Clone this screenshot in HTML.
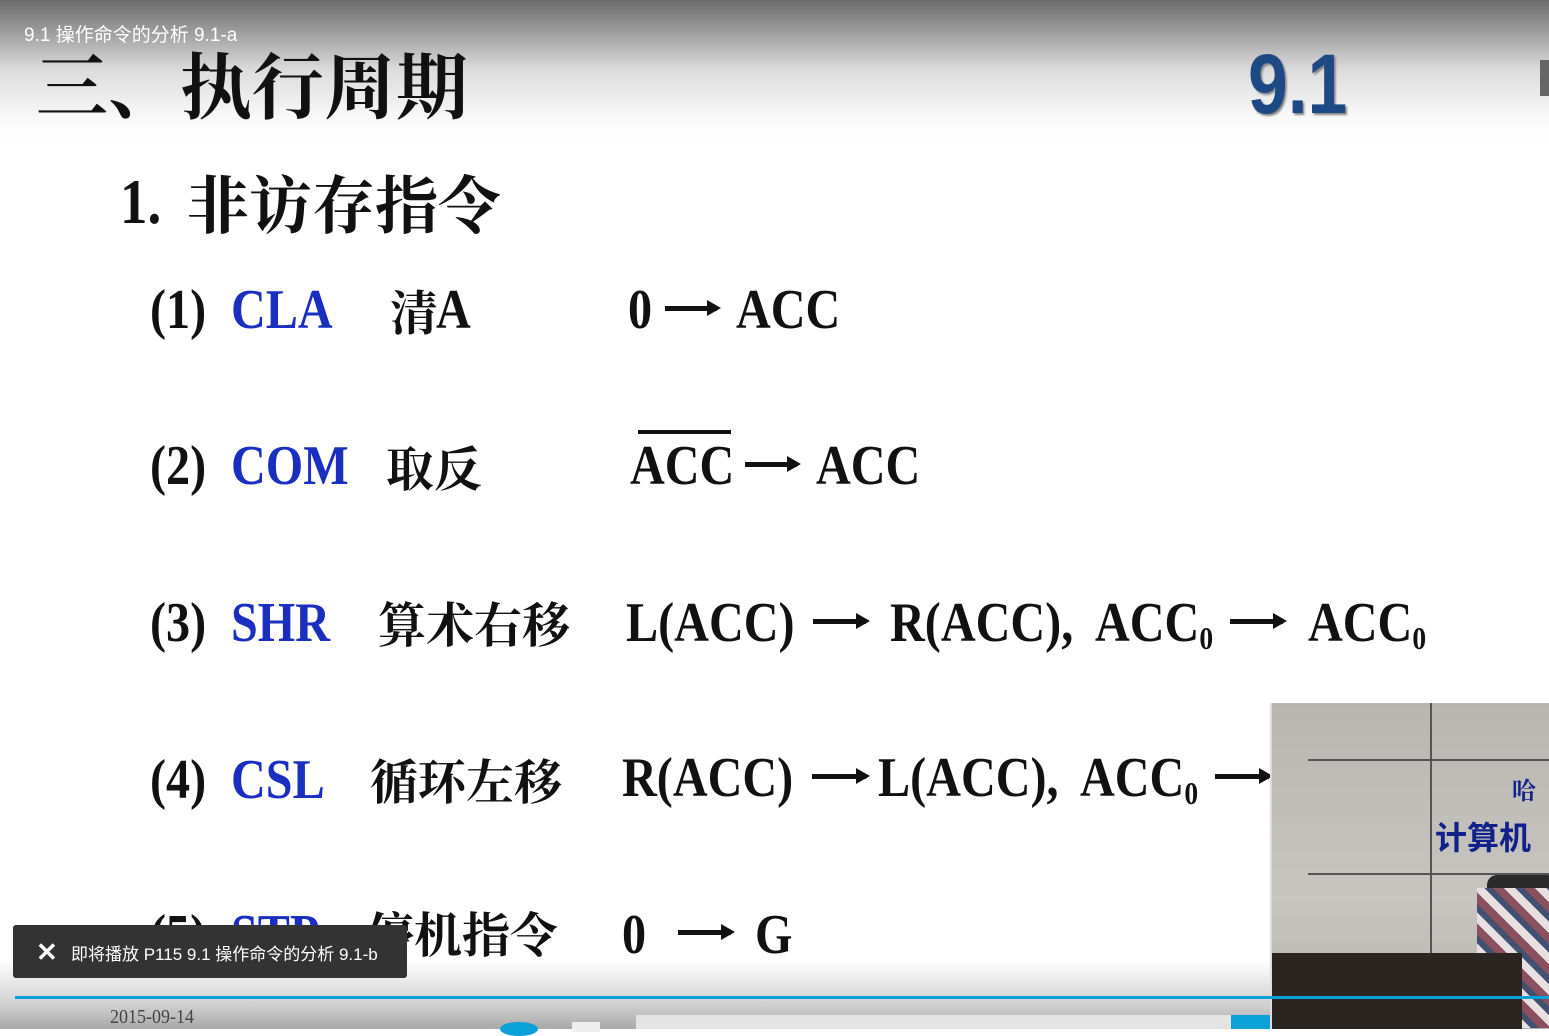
<!DOCTYPE html>
<html><head><meta charset="utf-8"><style>
*{margin:0;padding:0;box-sizing:border-box}
body{width:1549px;height:1029px;overflow:hidden;position:relative;background:#fff;font-family:"Liberation Serif","Noto Serif CJK SC",serif}
.top{position:absolute;left:0;top:0;width:1549px;height:140px;background:linear-gradient(#6c6c6c 0px,#9a9a9a 30px,#dcdcdc 70px,#fafafa 120px,#fff 140px)}
.a{position:absolute;white-space:nowrap}
.s{font-weight:bold;font-size:56px;line-height:56px;color:#111;transform:scaleX(.86);transform-origin:left top}
.b{color:#1a2fc0}
.s sub{font-size:32px;vertical-align:-8px}
.c{font-family:"Noto Serif CJK SC",serif;font-weight:700;font-size:48px;line-height:48px;color:#111}
.ar{position:absolute;height:5px;background:#111}
.ar::after{content:"";position:absolute;right:-4px;top:-6px;border-left:14px solid #111;border-top:8.5px solid transparent;border-bottom:8.5px solid transparent}
.bot{position:absolute;left:0;top:960px;width:1549px;height:69px;background:linear-gradient(rgba(255,255,255,0),#d0d0d0 45px,#a8a8a8)}
</style></head><body>
<div class="top"></div>
<div class="a" style="left:24px;top:20px;font:19px 'Liberation Sans','Noto Sans CJK SC',sans-serif;color:#fff">9.1 操作命令的分析 9.1-a</div>
<div class="a c" style="left:36px;top:46px;font-size:72px;line-height:72px">三、执行周期</div>
<div class="a" style="left:1248px;top:38px;font:bold 84px 'Liberation Sans',sans-serif;line-height:92px;color:#1d4a85;text-shadow:2px 2px 2px #888;transform:scaleX(.85);transform-origin:left top">9.1</div>
<div class="a" style="left:1540px;top:60px;width:9px;height:36px;background:#666"></div>
<div class="a s" style="left:120px;top:170px;font-size:64px;line-height:64px">1.</div>
<div class="a c" style="left:186px;top:170px;font-size:63px;line-height:63px">非访存指令</div>

<div class="a s" style="left:150px;top:282px">(1)</div>
<div class="a s b" style="left:231px;top:282px">CLA</div>
<div class="a c" style="left:390px;top:286px">清</div>
<div class="a s" style="left:436px;top:282px">A</div>
<div class="a s" style="left:628px;top:282px">0</div>
<div class="ar" style="left:665px;top:306px;width:52px"></div>
<div class="a s" style="left:736px;top:282px">ACC</div>

<div class="a s" style="left:150px;top:438px">(2)</div>
<div class="a s b" style="left:231px;top:438px">COM</div>
<div class="a c" style="left:386px;top:442px">取反</div>
<div class="a" style="left:638px;top:430px;width:93px;height:4px;background:#111"></div>
<div class="a s" style="left:630px;top:438px">ACC</div>
<div class="ar" style="left:745px;top:462px;width:52px"></div>
<div class="a s" style="left:816px;top:438px">ACC</div>

<div class="a s" style="left:150px;top:595px">(3)</div>
<div class="a s b" style="left:231px;top:595px">SHR</div>
<div class="a c" style="left:378px;top:598px">算术右移</div>
<div class="a s" style="left:626px;top:595px">L(ACC)</div>
<div class="ar" style="left:813px;top:619px;width:53px"></div>
<div class="a s" style="left:890px;top:595px">R(ACC),</div>
<div class="a s" style="left:1095px;top:595px">ACC<sub>0</sub></div>
<div class="ar" style="left:1230px;top:619px;width:53px"></div>
<div class="a s" style="left:1308px;top:595px">ACC<sub>0</sub></div>

<div class="a s" style="left:150px;top:752px">(4)</div>
<div class="a s b" style="left:231px;top:752px">CSL</div>
<div class="a c" style="left:370px;top:755px">循环左移</div>
<div class="a s" style="left:622px;top:750px">R(ACC)</div>
<div class="ar" style="left:812px;top:774px;width:54px"></div>
<div class="a s" style="left:878px;top:750px">L(ACC),</div>
<div class="a s" style="left:1080px;top:750px">ACC<sub>0</sub></div>
<div class="ar" style="left:1215px;top:774px;width:54px"></div>

<div class="a s" style="left:150px;top:907px">(5)</div>
<div class="a s b" style="left:231px;top:907px">STP</div>
<div class="a c" style="left:366px;top:908px">停机指令</div>
<div class="a s" style="left:622px;top:907px">0</div>
<div class="ar" style="left:678px;top:930px;width:53px"></div>
<div class="a s" style="left:755px;top:907px">G</div>

<div class="bot"></div>
<div class="a" style="left:110px;top:1006px;font:20px 'Liberation Serif',serif;color:#444;transform:scaleX(.9);transform-origin:left">2015-09-14</div>
<div class="a" style="left:500px;top:1022px;width:38px;height:14px;border-radius:50%;background:#0aa0d8"></div>
<div class="a" style="left:572px;top:1022px;width:28px;height:10px;background:#eee"></div>
<div class="a" style="left:636px;top:1015px;width:596px;height:14px;background:#e4e4e4"></div>
<div class="a" style="left:1231px;top:1015px;width:75px;height:14px;background:#0aa0d8"></div>

<div class="a" style="left:1270px;top:703px;width:279px;height:326px;background:linear-gradient(#b9b6b1,#c7c5c0 60%,#b5b3ae);border-left:2px solid #ddd;overflow:hidden">
 <div class="a" style="left:158px;top:0;width:2px;height:260px;background:#555"></div>
 <div class="a" style="left:36px;top:56px;width:250px;height:2px;background:#555"></div>
 <div class="a" style="left:36px;top:170px;width:250px;height:2px;background:#555"></div>
 <div class="a" style="left:240px;top:68px;font:bold 24px 'Noto Serif CJK SC',serif;color:#12208a">哈</div>
 <div class="a" style="left:163px;top:110px;font:bold 32px 'Noto Sans CJK SC',sans-serif;color:#12208a">计算机</div>
 <div class="a" style="left:215px;top:172px;width:70px;height:60px;background:#2a2a2a;border-radius:10px 10px 0 0"></div>
 <div class="a" style="left:205px;top:185px;width:80px;height:140px;background:repeating-linear-gradient(45deg,#8a5060 0 8px,#e8e0e0 8px 16px,#405070 16px 22px)"></div>
 <div class="a" style="left:0;top:250px;width:250px;height:80px;background:#2b2522"></div>
</div>
<div class="a" style="left:15px;top:996px;width:1534px;height:3px;background:#0aa0d8"></div>

<div class="a" style="left:13px;top:925px;width:394px;height:53px;background:#333;border-radius:3px"></div>
<div class="a" style="left:36px;top:937px;font:bold 26px 'Liberation Sans',sans-serif;color:#fff">✕</div>
<div class="a" style="left:71px;top:940px;font:17px 'Liberation Sans','Noto Sans CJK SC',sans-serif;color:#fff">即将播放 P115 9.1 操作命令的分析 9.1-b</div>
</body></html>
